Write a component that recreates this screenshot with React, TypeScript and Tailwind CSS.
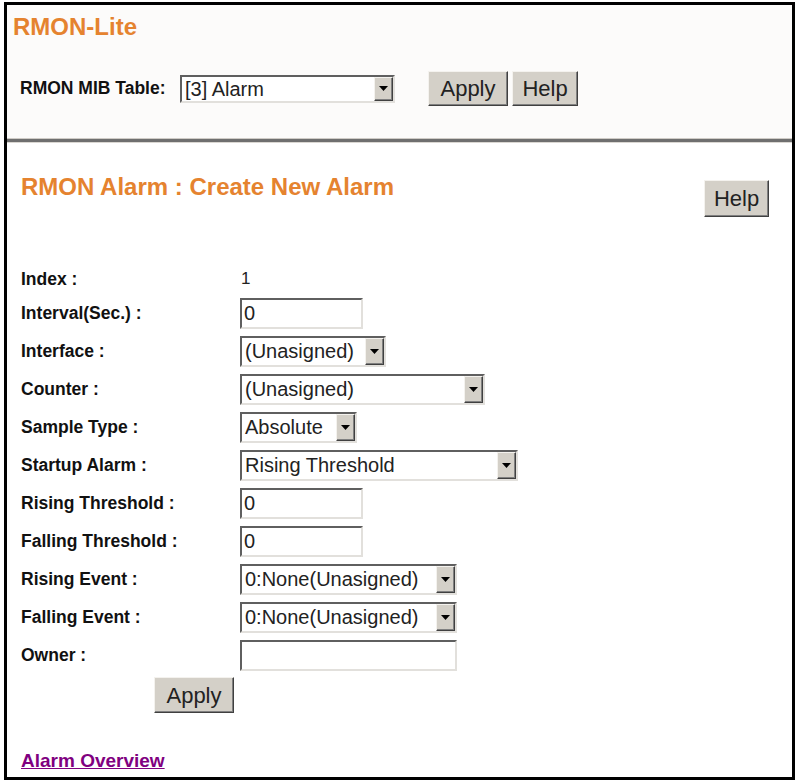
import React from 'react';

const FONT = { fontFamily: '"Liberation Sans", Arial, sans-serif' };

function Arrow() {
  return (
    <div className="h-full w-[19px] shrink-0 bg-[#d4d0c8] border border-t-[#f4f2ee] border-l-[#f4f2ee] border-b-[#404040] border-r-[#404040] shadow-[inset_-1px_-1px_0_#808080] flex items-center justify-center">
      <svg width="9" height="5" viewBox="0 0 9 5">
        <path d="M0 0h9L4.5 5z" fill="#000" />
      </svg>
    </div>
  );
}

function Select({ value, width, height = 'h-[31px]' }: { value: string; width: string; height?: string }) {
  return (
    <div
      className={`${width} ${height} flex items-stretch bg-white border-2 border-t-[#5f5f5f] border-l-[#5f5f5f] border-b-[#e2e0dc] border-r-[#e2e0dc]`}
    >
      <div className="flex-1 flex items-center pl-[3px] text-[20px] text-[#222] whitespace-nowrap overflow-hidden">{value}</div>
      <Arrow />
    </div>
  );
}

function TextInput({ value = '', width }: { value?: string; width: string }) {
  return (
    <div
      className={`${width} h-[31px] flex items-center bg-white border-2 border-t-[#5f5f5f] border-l-[#5f5f5f] border-b-[#e2e0dc] border-r-[#e2e0dc] pl-[2px] text-[20px] text-[#222]`}
    >
      {value}
    </div>
  );
}

function Button({ label, className = '' }: { label: string; className?: string }) {
  return (
    <div
      className={`bg-[#d4d0c8] border border-t-[#f4f2ee] border-l-[#f4f2ee] border-b-[#404040] border-r-[#404040] shadow-[inset_-1px_-1px_0_#808080] flex items-center justify-center text-[22px] text-[#222] ${className}`}
    >
      {label}
    </div>
  );
}

const rows: { label: string; field: React.ReactNode }[] = [
  { label: 'Interval(Sec.) :', field: <TextInput value="0" width="w-[123px]" /> },
  { label: 'Interface :', field: <Select value="(Unasigned)" width="w-[146px]" /> },
  { label: 'Counter :', field: <Select value="(Unasigned)" width="w-[245px]" /> },
  { label: 'Sample Type :', field: <Select value="Absolute" width="w-[117px]" /> },
  { label: 'Startup Alarm :', field: <Select value="Rising Threshold" width="w-[278px]" /> },
  { label: 'Rising Threshold :', field: <TextInput value="0" width="w-[123px]" /> },
  { label: 'Falling Threshold :', field: <TextInput value="0" width="w-[123px]" /> },
  { label: 'Rising Event :', field: <Select value="0:None(Unasigned)" width="w-[217px]" /> },
  { label: 'Falling Event :', field: <Select value="0:None(Unasigned)" width="w-[217px]" /> },
  { label: 'Owner :', field: <TextInput width="w-[217px]" /> },
];

export default function App() {
  return (
    <div className="w-[798px] h-[781px] bg-white pl-[4px] pt-[2px]" style={FONT}>
      <div className="w-[791px] h-[778px] border-[3px] border-black flex flex-col">
        {/* top: table picker */}
        <div className="h-[133px] bg-[#fcfbfa] pl-[6px] pt-[8px]">
          <div className="text-[24px] font-bold text-[#e5832f] leading-[28px]">RMON-Lite</div>
          <div className="mt-[30px] flex items-center h-[35px] pl-[7px]">
            <div className="w-[160px] text-[17.5px] font-bold text-[#111]">RMON MIB Table:</div>
            <Select value="[3] Alarm" width="w-[215px]" height="h-[28px]" />
            <Button label="Apply" className="ml-[33px] w-[80px] h-[35px]" />
            <Button label="Help" className="ml-[4px] w-[66px] h-[35px]" />
          </div>
        </div>

        {/* separator */}
        <div className="h-[5px] border-t border-b border-t-[#cfcbc6] border-b-[#dad7d2] bg-[#6f6f6f]" />

        {/* create new alarm */}
        <div className="flex-1 flex flex-col items-start pl-[14px] pr-[23px]">
          <div className="self-stretch flex justify-between items-start pt-[30px]">
            <div className="text-[24px] font-bold text-[#e5832f] leading-[28px]">RMON Alarm : Create New Alarm</div>
            <Button label="Help" className="mt-[7px] w-[65px] h-[37px]" />
          </div>

          <div className="mt-[47px] flex flex-col">
            <div className="h-[30px] flex items-center">
              <div className="w-[219px] text-[17.5px] font-bold text-[#111]">Index :</div>
              <span className="pl-[1px] text-[17px] text-[#222]">1</span>
            </div>
            {rows.map((r) => (
              <div key={r.label} className="h-[38px] flex items-center">
                <div className="w-[219px] text-[17.5px] font-bold text-[#111]">{r.label}</div>
                {r.field}
              </div>
            ))}
          </div>

          <Button label="Apply" className="ml-[133px] mt-[3px] w-[80px] h-[36px]" />

          <a href="#" className="mt-[36px] text-[19px] leading-[23px] font-bold text-[#800080] underline">
            Alarm Overview
          </a>
        </div>
      </div>
    </div>
  );
}
